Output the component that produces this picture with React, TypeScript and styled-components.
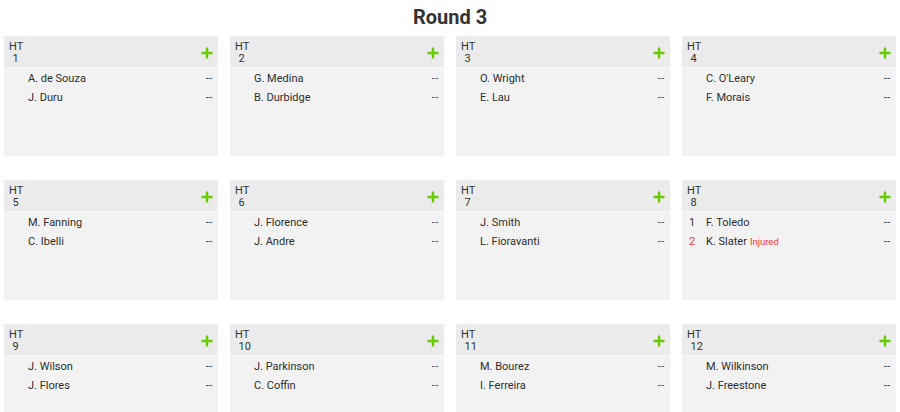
import styled, { createGlobalStyle } from "styled-components";

const GlobalStyle = createGlobalStyle`
  html, body {
    margin: 0;
    padding: 0;
    background: #fff;
    font-family: Roboto, "Liberation Sans", Arial, sans-serif;
    color: #333;
  }
`

type Surfer = { name: string; seed?: number; injured?: boolean }
type Heat = { id: number; surfers: Surfer[] }

const heats: Heat[] = [
    { id: 1, surfers: [{ name: "A. de Souza" }, { name: "J. Duru" }] },
    { id: 2, surfers: [{ name: "G. Medina" }, { name: "B. Durbidge" }] },
    { id: 3, surfers: [{ name: "O. Wright" }, { name: "E. Lau" }] },
    { id: 4, surfers: [{ name: "C. O'Leary" }, { name: "F. Morais" }] },
    { id: 5, surfers: [{ name: "M. Fanning" }, { name: "C. Ibelli" }] },
    { id: 6, surfers: [{ name: "J. Florence" }, { name: "J. Andre" }] },
    { id: 7, surfers: [{ name: "J. Smith" }, { name: "L. Fioravanti" }] },
    { id: 8, surfers: [{ name: "F. Toledo", seed: 1 }, { name: "K. Slater", seed: 2, injured: true }] },
    { id: 9, surfers: [{ name: "J. Wilson" }, { name: "J. Flores" }] },
    { id: 10, surfers: [{ name: "J. Parkinson" }, { name: "C. Coffin" }] },
    { id: 11, surfers: [{ name: "M. Bourez" }, { name: "I. Ferreira" }] },
    { id: 12, surfers: [{ name: "M. Wilkinson" }, { name: "J. Freestone" }] },
]

const Page = styled.main`
  width: 900px;
  height: 412px;
  overflow: hidden;
`
const Title = styled.h1`
  margin: 0;
  height: 36px;
  line-height: 34px;
  text-align: center;
  font-size: 20px;
  font-weight: 700;
  color: #333;
`
const Grid = styled.div`
  display: grid;
  grid-template-columns: repeat(4, 1fr);
  column-gap: 12px;
  row-gap: 24px;
  padding: 0 4px;
`
const Card = styled.section`
  height: 120px;
  background: #f2f2f2;
  display: flex;
  flex-direction: column;
`
const Header = styled.header`
  height: 32px;
  box-sizing: border-box;
  padding: 5px 5px 0 5px;
  background: #ebebeb;
  border-bottom: 1px solid #fafafa;
  display: flex;
  justify-content: space-between;
  align-items: flex-start;
`
const HeatLabel = styled.div`
  font-size: 11px;
  line-height: 11.5px;
  color: #333;
  display: flex;
  flex-direction: column;
`
const HeatNumber = styled.span`
  padding-left: 3.5px;
`
const AddButton = styled.button`
  border: 0;
  background: none;
  padding: 0;
  margin-top: 6px;
  width: 12px;
  height: 12px;
  cursor: pointer;
  display: flex;
`
const List = styled.div`
  padding-top: 1px;
`
const Row = styled.div`
  height: 19px;
  display: flex;
  align-items: center;
  padding: 0 5px 0 7px;
  font-size: 11px;
`
const Seed = styled.span<{ $alert?: boolean }>`
  width: 17px;
  color: ${p => p.$alert ? "#f23a3a" : "#333"};
`
const Name = styled.span`
  flex: 1;
  color: #2e2e2e;
`
const Injured = styled.span`
  margin-left: 3px;
  font-size: 9.5px;
  color: #f23a3a;
`
const Score = styled.span`
  color: #444;
  font-size: 11px;
  letter-spacing: 0.6px;
`

function PlusIcon() {
    return <svg width="12" height="12" viewBox="0 0 12 12">
        <path d="M6 0.5v11M0.5 6h11" stroke="#66cc00" strokeWidth="2.4" fill="none" />
    </svg>
}

export default function App() {
    return <Page>
        <GlobalStyle />
        <Title>Round 3</Title>
        <Grid>
            {heats.map(h => (
                <Card key={h.id}>
                    <Header>
                        <HeatLabel>
                            <span>HT</span>
                            <HeatNumber>{h.id}</HeatNumber>
                        </HeatLabel>
                        <AddButton aria-label="Add"><PlusIcon /></AddButton>
                    </Header>
                    <List>
                        {h.surfers.map(s => (
                            <Row key={s.name}>
                                <Seed $alert={s.injured}>{s.seed ?? ""}</Seed>
                                <Name>
                                    {s.name}
                                    {s.injured && <Injured>Injured</Injured>}
                                </Name>
                                <Score>--</Score>
                            </Row>
                        ))}
                    </List>
                </Card>
            ))}
        </Grid>
    </Page>
}
